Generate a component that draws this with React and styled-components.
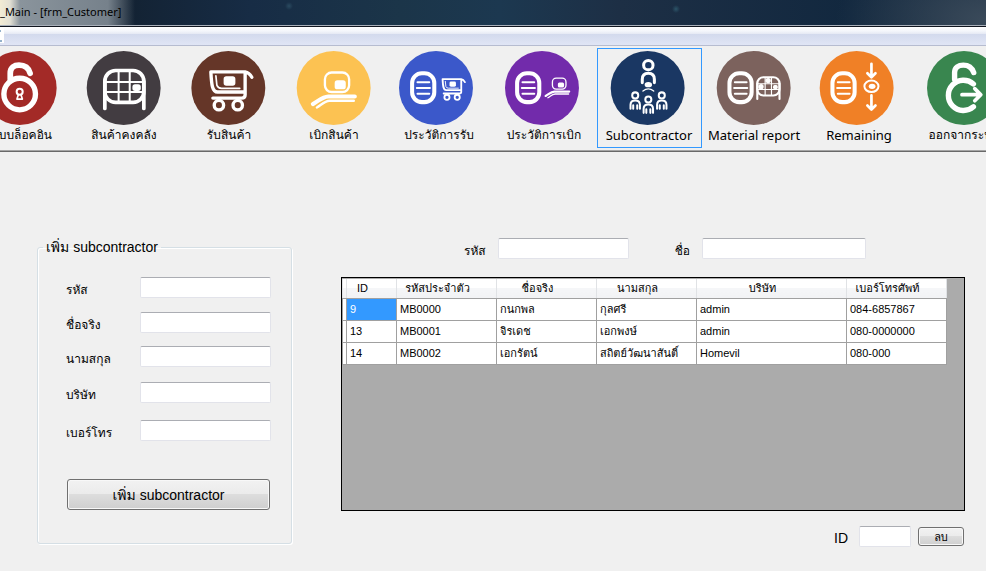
import React from "react";
import styled, { createGlobalStyle } from "styled-components";

const GlobalStyle = createGlobalStyle`
  * { box-sizing: border-box; }
  body {
    margin: 0;
    background: #f0f0f0;
    color: #000;
    font-family: "Liberation Sans", Loma, "Noto Sans Thai", sans-serif;
    font-size: 14px;
  }
`;

const Page = styled.div`
  display: flex;
  flex-direction: column;
  min-height: 100vh;
  overflow: hidden;
`;

const TitleBar = styled.header`
  height: 27px;
  border-bottom: 1px solid #10151f;
  box-shadow: inset 0 -1px #a9b0ba;
  background:
    radial-gradient(ellipse 150px 90px at 100% 20px, #3a4a5a, transparent),
    radial-gradient(circle 4px at 676px 9px, #2c5468, transparent),
    radial-gradient(circle 4px at 289px 6px, #2a4a60, transparent),
    linear-gradient(90deg, #12202f 100px, #172c45 250px, #1b3549 400px, #1c3850 500px, #1d2f45 620px, #12283f 850px, #172b40);
`;

const Title = styled.h1`
  display: inline-block;
  margin: 0;
  padding: 0 14px 0 0;
  height: 25px;
  font: 11px/24px "Noto Sans", sans-serif;
  white-space: nowrap;
  background: linear-gradient(90deg, #f3ecd4 0, #e2e0d4 10px, #8a949c 20px, #76818b 108px, rgba(110, 122, 133, 0));
`;

const MenuBar = styled.div`
  height: 19px;
  border-bottom: 1px solid #b6bcd0;
  background: linear-gradient(#fff 0, #f4f6fb 4px, #e5e9f4 7px, #d3daed 7px, #e0e5f5 100%);
`;

const ChildIcon = styled.span`
  display: flex;
  width: 4px;
  height: 16px;
  background: #fff;
`;

const Toolbar = styled.nav`
  display: flex;
  justify-content: center;
  height: 106px;
  padding: 2px 3px 3px 0;
  border-bottom: 1px solid #696969;
  box-shadow: inset 0 -1px #a5a5a5;
`;

const ToolButton = styled.button`
  display: flex;
  flex: 0 0 105px;
  flex-direction: column;
  align-items: center;
  padding: 2px 0 0;
  height: 100px;
  border: 1px solid ${(p) => (p.$active ? "#3399ff" : "transparent")};
  background: none;
  color: #000;
  white-space: nowrap;
  font: ${(p) => (p.$latin ? 13 : 12)}px/20px "Noto Sans", Loma, sans-serif;
`;

const ToolIcon = styled.svg`
  flex: none;
  width: 80px;
  height: 74px;
  fill: none;
  stroke: #fff;
  stroke-linecap: round;
  stroke-linejoin: round;
`;

const Content = styled.main`
  display: grid;
  grid-template-columns: 255px 1fr;
  column-gap: 49px;
  align-items: start;
  padding: 86px 21px 24px 37px;
`;

const Group = styled.fieldset`
  min-width: 0;
  margin: 0;
  padding: 21px 20px 33px 28px;
  border: 1px solid #d5dfe5;
  border-radius: 3px;
  box-shadow: inset 1px 1px #fff, 1px 1px #fff;
`;

const GroupTitle = styled.legend`
  margin-left: -23px;
  padding: 0 3px;
  line-height: 18px;
`;

const Fields = styled.div`
  display: grid;
  grid-template-columns: 74px 1fr;
  grid-template-rows: 35px 34px 36px 38px 22px;
  align-items: start;
`;

const Label = styled.label`
  font-size: 12px;
  line-height: 26px;
  white-space: nowrap;
`;

const TextBox = styled.input`
  width: ${(p) => (p.$width ? `${p.$width}px` : "100%")};
  height: 21px;
  padding: 0 4px;
  border: 1px solid #e2e3ea;
  border-top-color: #abadb3;
  border-radius: 2px;
  background: #fff;
  font: inherit;
`;

const PushButton = styled.button`
  width: ${(p) => (p.$small ? "46px" : "calc(100% - 2px)")};
  height: ${(p) => (p.$small ? 19 : 31)}px;
  margin: ${(p) => (p.$small ? "0 1px 0 0" : "37px 1px 0")};
  padding: 0;
  border: 1px solid #707070;
  border-radius: 3px;
  box-shadow: inset 0 0 0 1px #f8f8f8;
  background: linear-gradient(#f2f2f2, #ebebeb 49%, #dddddd 50%, #cfcfcf);
  color: #000;
  font-family: inherit;
  font-size: ${(p) => (p.$small ? 11 : 14)}px;
  line-height: 16px;
`;

const Panel = styled.section`
  display: flex;
  flex-direction: column;
`;

const SearchRow = styled.div`
  display: flex;
  gap: 10px;
  margin-bottom: 18px;
  padding-left: 123px;
`;

const SearchField = styled.div`
  display: flex;
  gap: 12px;
  margin-right: 36px;
  height: 21px;
`;

const GridFrame = styled.div`
  min-height: 234px;
  padding: 1px 0;
  border: 1px solid #000;
  background: #ababab;
`;

const Table = styled.table`
  width: 604px;
  border-collapse: collapse;
  table-layout: fixed;
  background: #fff;
  font-size: 11px;
`;

const Col = styled.col`
  width: ${(p) => p.$width}px;
`;

const HeadCell = styled.th`
  height: 19px;
  padding: 0 ${(p) => (p.$narrow ? 18 : 0)}px 0 0;
  border: 1px solid #e0e2e5;
  border-width: 0 1px;
  border-bottom: 1px solid #a0a0a0;
  background: linear-gradient(#fff, #fff 45%, #f5f6f8 50%, #f1f2f4);
  font-weight: normal;
  white-space: nowrap;
`;

const Cell = styled.td`
  height: 22px;
  padding: 0 3px;
  border: 1px solid #a0a0a0;
  background: ${(p) => (p.$selected ? "#3399ff" : "#fff")};
  color: ${(p) => (p.$selected ? "#fff" : "#000")};
  overflow: hidden;
  white-space: nowrap;
`;

const Footer = styled.div`
  display: flex;
  align-items: center;
  justify-content: flex-end;
  gap: 7px;
  margin-top: 15px;
`;

const IdLabel = styled.label`
  margin-right: 4px;
  padding-top: 3px;
`;

const Cart = ({ transform }) => (
  <g transform={transform}>
    <path strokeWidth="10" d="M58 62H160Q172 64 180 78M58 62C60 100 62 122 78 122H160M160 62V130Q160 140 150 140H64" />
    <path strokeWidth="5" d="M73 74L76 102Q79 111 90 111H144" />
    <rect x="96" y="75" width="35" height="28" rx="8" fill="#fff" stroke="none" />
    <circle cx="82" cy="161" r="14" strokeWidth="10" />
    <circle cx="138" cy="161" r="14" strokeWidth="10" />
  </g>
);

const Gate = ({ transform }) => (
  <g transform={transform}>
    <rect x="54" y="58" width="116" height="95" rx="32" strokeWidth="11" />
    <path strokeWidth="11" d="M54 90V171M170 90V171" />
    <path strokeWidth="6" d="M95 60V150M128 60V150M56 92H168M56 122H168" />
    <rect x="136" y="99" width="25" height="20" rx="8" fill="#fff" stroke="none" />
  </g>
);

const Hand = ({ transform }) => (
  <g transform={transform}>
    <rect x="84" y="64" width="72" height="58" rx="20" strokeWidth="7" />
    <rect x="113" y="87" width="33" height="27" rx="8" fill="#fff" stroke="none" />
    <path strokeWidth="12" d="M48 158C66 148 76 136 94 135H173" />
    <path strokeWidth="7" d="M60 168C74 160 82 149 98 148H170" />
  </g>
);

const Sheet = ({ x }) => (
  <g>
    <rect x={x} y="66" width="66" height="86" rx="29" strokeWidth="12" />
    <path strokeWidth="6" d={`M${x + 16} 93h35M${x + 14} 110h39M${x + 16} 127h35`} />
  </g>
);

const Person = ({ x, y }) => (
  <g transform={`translate(${x} ${y})`} strokeWidth="6">
    <circle r="9" />
    <path d="M-14 40V28Q-14 15 0 15Q14 15 14 28V40M-6 40V29M6 40V29" />
  </g>
);

const tools = [
  { label: "ระบบล็อคอิน", color: "#a32a27", cx: 113, art: (
    <>
      <path strokeWidth="17" d="M82 84V66C82 48 94 42 108 42C124 42 136 48 141 66" />
      <circle cx="110" cy="128" r="47" strokeWidth="16" />
      <circle cx="110" cy="121" r="9" strokeWidth="6" />
      <path strokeWidth="5" d="M106 130L102 143H118L114 130" />
    </>
  ) },
  { label: "สินค้าคงคลัง", color: "#423c41", cx: 110, art: <Gate /> },
  { label: "รับสินค้า", color: "#653628", cx: 109, art: <Cart /> },
  { label: "เบิกสินค้า", color: "#fcc252", cx: 110, art: <Hand /> },
  { label: "ประวัติการรับ", color: "#3b58ca", cx: 102, art: (
    <><Sheet x={39} /><Cart transform="translate(98 50) scale(.545)" /></>
  ) },
  { label: "ประวัติการเบิก", color: "#722bab", cx: 105, art: (
    <><Sheet x={36} /><Hand transform="translate(94 45) scale(.56)" /></>
  ) },
  { label: "Subcontractor", color: "#1a3763", cx: 107, latin: true, active: true, art: (
    <>
      <circle cx="112" cy="42" r="14" strokeWidth="9" />
      <path strokeWidth="9" d="M94 94V84Q94 66 112 66Q130 66 130 84V94" />
      <ellipse cx="112" cy="100" rx="11" ry="8" fill="#fff" stroke="none" />
      <path strokeWidth="4" d="M96 119Q112 106 128 119" />
      <Person x={73} y={132} />
      <Person x={152} y={132} />
      <Person x={112} y={144} />
    </>
  ) },
  { label: "Material report", color: "#7c625d", cx: 110, latin: true, art: (
    <>
      <Sheet x={38} />
      <Gate transform="translate(90 45) scale(.57)" />
      <g fill="#fff" stroke="none">
        <circle cx="153" cy="88" r="8" />
        <circle cx="132" cy="106" r="8" />
      </g>
    </>
  ) },
  { label: "Remaining", color: "#f08026", cx: 104, latin: true, art: (
    <>
      <Sheet x={38} />
      <path strokeWidth="8" d="M154 38V76M142 66L154 78L166 66M154 132V172M142 162L154 174L166 162" />
      <ellipse cx="154" cy="105" rx="21" ry="17" strokeWidth="6" />
      <ellipse cx="156" cy="105" rx="10" ry="8" fill="#fff" stroke="none" />
    </>
  ) },
  { label: "ออกจากระบบ", color: "#39864f", cx: 111, art: (
    <>
      <path strokeWidth="16" d="M82 84V64C82 48 94 42 108 42C124 42 134 50 139 64M138 98A45 45 0 1 0 138 166" />
      <path strokeWidth="11" d="M104 130H158M142 112L160 130L142 148" />
    </>
  ) },
];

const fields = [
  ["code", "รหัส"],
  ["firstName", "ชื่อจริง"],
  ["lastName", "นามสกุล"],
  ["company", "บริษัท"],
  ["phone", "เบอร์โทร"],
];

const columns = [
  ["ID", 50],
  ["รหัสประจำตัว", 100],
  ["ชื่อจริง", 100],
  ["นามสกุล", 100],
  ["บริษัท", 150],
  ["เบอร์โทรศัพท์", 100],
];

const rows = [
  ["9", "MB0000", "กนกพล", "กุลศรี", "admin", "084-6857867"],
  ["13", "MB0001", "จิรเดช", "เอกพงษ์", "admin", "080-0000000"],
  ["14", "MB0002", "เอกรัตน์", "สถิตย์วัฒนาสันติ์", "Homevil", "080-000"],
];

export default function App() {
  return (
    <Page>
      <GlobalStyle />
      <TitleBar><Title>_Main - [frm_Customer]</Title></TitleBar>
      <MenuBar>
        <ChildIcon>
          <svg width="4" height="16" viewBox="0 0 4 16" aria-hidden="true">
            <path d="M0 4h1M0 14h2" stroke="#2a6496" strokeWidth="1" />
          </svg>
        </ChildIcon>
      </MenuBar>
      <Toolbar>
        {tools.map((t) => (
          <ToolButton key={t.label} type="button" $active={t.active} $latin={t.latin}>
            <ToolIcon viewBox={`${-8 + 110 - t.cx} 0 238 220`} aria-hidden="true">
              <circle cx="110" cy="110" r="110" fill={t.color} stroke="none" />
              {t.art}
            </ToolIcon>
            {t.label}
          </ToolButton>
        ))}
      </Toolbar>
      <Content>
        <Group>
          <GroupTitle>เพิ่ม subcontractor</GroupTitle>
          <Fields>
            {fields.map(([id, label]) => (
              <React.Fragment key={id}>
                <Label htmlFor={id}>{label}</Label>
                <TextBox id={id} type="text" />
              </React.Fragment>
            ))}
          </Fields>
          <PushButton type="button">เพิ่ม subcontractor</PushButton>
        </Group>
        <Panel>
          <SearchRow>
            <SearchField>
              <Label htmlFor="searchCode">รหัส</Label>
              <TextBox id="searchCode" type="text" $width={131} />
            </SearchField>
            <SearchField>
              <Label htmlFor="searchName">ชื่อ</Label>
              <TextBox id="searchName" type="text" $width={164} />
            </SearchField>
          </SearchRow>
          <GridFrame>
            <Table>
              <colgroup>
                <Col $width={4} />
                {columns.map(([name, width]) => <Col key={name} $width={width} />)}
              </colgroup>
              <thead>
                <tr>
                  <HeadCell />
                  {columns.map(([name]) => <HeadCell key={name} scope="col" $narrow>{name}</HeadCell>)}
                </tr>
              </thead>
              <tbody>
                {rows.map((row, r) => (
                  <tr key={row[0]}>
                    <Cell as="th" />
                    {row.map((value, c) => (
                      <Cell key={columns[c][0]} $selected={r === 0 && c === 0}>{value}</Cell>
                    ))}
                  </tr>
                ))}
              </tbody>
            </Table>
          </GridFrame>
          <Footer>
            <IdLabel htmlFor="deleteId">ID</IdLabel>
            <TextBox id="deleteId" type="text" $width={52} />
            <PushButton type="button" $small>ลบ</PushButton>
          </Footer>
        </Panel>
      </Content>
    </Page>
  );
}
